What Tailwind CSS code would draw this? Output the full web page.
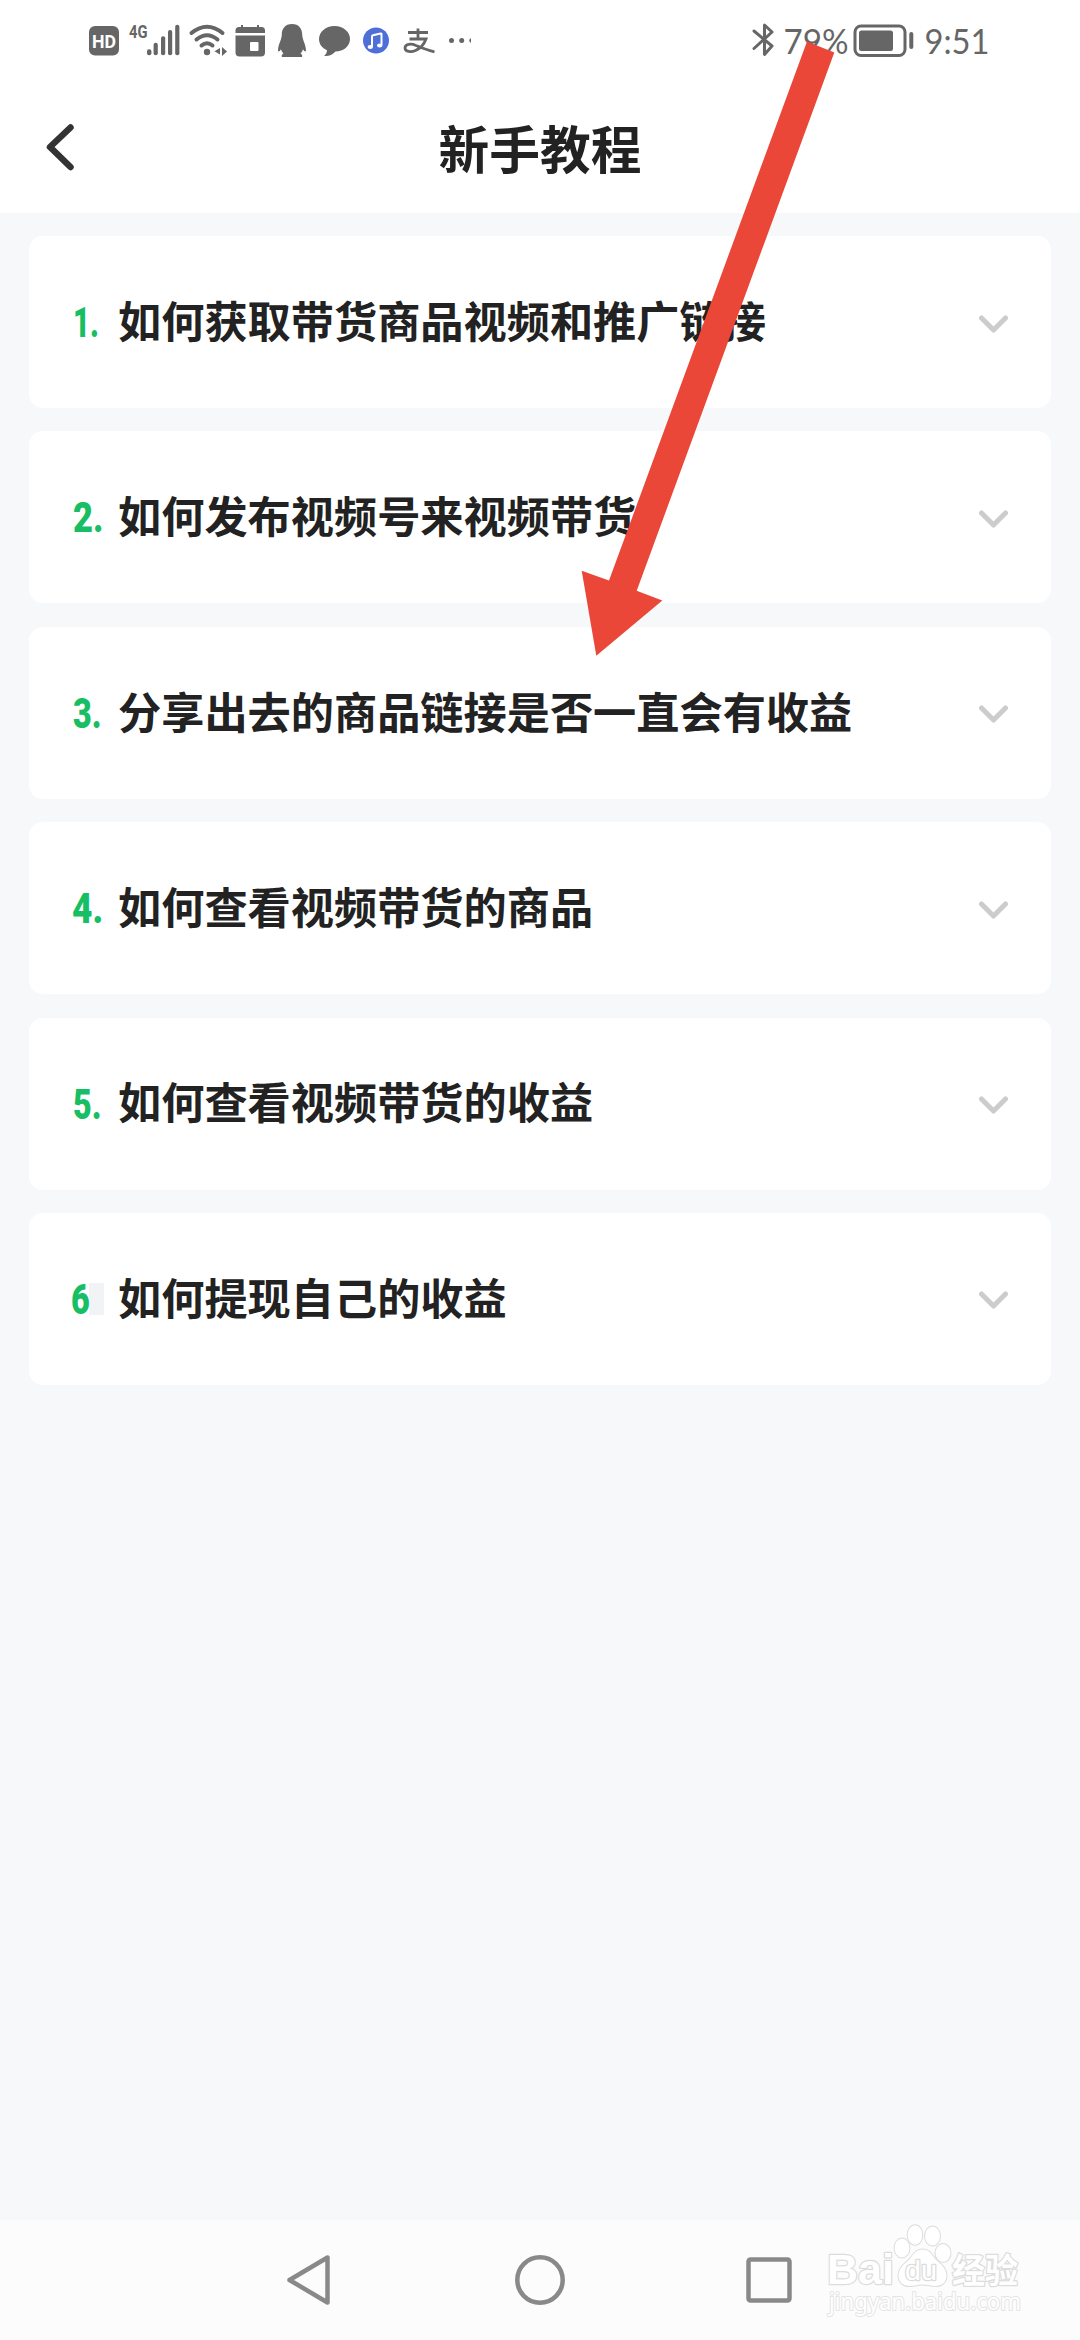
<!DOCTYPE html>
<html lang="zh-CN">
<head>
<meta charset="utf-8">
<title>新手教程</title>
<script src="https://cdn.jsdelivr.net/npm/@tailwindcss/browser@4"></script>
</head>
<body class="relative flex h-[2340px] w-[1080px] flex-col overflow-hidden bg-[#f6f8fa] font-['Noto_Sans_CJK_SC',sans-serif] text-[#222]">
<header class="h-[213px] shrink-0 bg-white">
  <!-- status bar -->
  <div class="flex h-20 items-start justify-between pr-[87px] pl-20 text-[#666]">
    <div class="flex">
      <svg class="h-20 w-[45px]" viewBox="80 0 45 80" fill="currentColor"><rect x="89" y="26" width="30" height="29.5" rx="6"/><text x="92" y="47.700" font-family="Roboto" font-weight="700" font-size="19" textLength="24" lengthAdjust="spacingAndGlyphs" fill="#fff">HD</text></svg>
      <svg class="h-20 w-[60px]" viewBox="125 0 60 80" fill="currentColor"><text x="129" y="38" font-family="Roboto" font-weight="700" font-size="19" textLength="18.500" lengthAdjust="spacingAndGlyphs">4G</text><rect x="147" y="49.3" width="4.4" height="6" rx="2"/><rect x="153.6" y="42.7" width="4.2" height="12.6" rx="2"/><rect x="161" y="36.3" width="4.2" height="19" rx="2"/><rect x="168" y="30" width="4.2" height="25.3" rx="2"/><rect x="175.2" y="24.7" width="4.2" height="30.6" rx="2"/></svg>
      <svg class="h-20 w-[45px]" viewBox="185 0 45 80" fill="none" stroke="currentColor" stroke-width="4" stroke-linecap="round"><path d="M191.500 33Q207 20.500 222.500 33M196.500 39.500Q207 31 217.500 39.500M201.500 45.500Q207 41 212.500 45.500"/><circle cx="207" cy="52" r="3.200" fill="currentColor" stroke="none"/><path d="M220 48v6.500l-5.500-3.200zM222 47v9l5-4.500z" fill="currentColor" stroke="none"/></svg>
      <svg class="h-20 w-[42px]" viewBox="230 0 42 80" fill="currentColor"><path d="M235.500 33v-2.500q0-3.500 3.500-3.500h2v-2h2v2h14v-2h2v2h2.500q3.500 0 3.500 3.500v2.500zM235.500 35.500h29.500v17q0 4-4 4h-21.500q-4 0-4-4z"/><rect x="250" y="42" width="8.500" height="9" rx="1" fill="#fff"/></svg>
      <svg class="h-20 w-10" viewBox="272 0 40 80" fill="currentColor"><path d="M292 24c-7 0-10.200 5-10.200 10.500 0 5-3.300 9-3.800 15.500 0 2 1.200 2 3-.8.700 2 1.500 3.300 2.500 4.300-2 1-2 2.500-1.500 3.500h20c.5-1 .3-2.500-1.500-3.500 1-1 2-2.500 2.500-4.300 1.800 2.800 3 2.800 3 .8-.5-6.500-3.800-10.500-3.800-15.500C302.200 29 299 24 292 24z"/></svg>
      <svg class="h-20 w-[45px]" viewBox="312 0 45 80" fill="currentColor"><path d="M334.500 26c9 0 15.500 6 15.500 13s-6.500 12.500-14.500 12.500c-3.500 4-8 5-11.500 4.300 2-1.500 3-3.500 3-5.600-5-2.200-8-6.200-8-11.200 0-7 6.500-13 15.500-13z"/></svg>
      <svg class="h-20 w-[42px]" viewBox="357 0 42 80"><circle cx="376" cy="40.500" r="13" fill="#4f6fd8"/><path d="M372 47v-10.500q0-1 1-1.200l7.500-1.800q1-.2 1 .8V45" fill="none" stroke="#fff" stroke-width="2"/><ellipse cx="370.300" cy="47" rx="2.700" ry="2" fill="#fff"/><ellipse cx="379.700" cy="45.500" rx="2.700" ry="2" fill="#fff"/></svg>
      <svg class="h-20 w-[43px]" viewBox="399 0 43 80" fill="none" stroke="currentColor" stroke-width="2.800"><path d="M408 32.500h20M418 28.500v10.500M409.500 39h16.500c-2 5.500-6 9.500-10.500 11.500-4 1.800-10.500 1.500-10.500-2.500 0-4.500 6.500-4.500 11-2.500 6 2.500 12 5 18.500 6.300"/></svg>
      <svg class="h-20 w-[29px]" viewBox="442 0 29 80" fill="currentColor"><circle cx="451.500" cy="40.500" r="2.500"/><circle cx="461.700" cy="40.500" r="2.500"/><path d="M471 38.200v4.600a2.400 2.400 0 010-4.600z"/></svg>
    </div>
    <div class="flex">
      <svg class="h-20 w-[34px]" viewBox="747 0 34 80" fill="none" stroke="currentColor" stroke-width="3" stroke-linecap="round" stroke-linejoin="round"><path d="M754 31l18 15-7.500 8.500v-29.500l7.500 7L754 48.500"/></svg>
      <svg class="h-20 w-[69px]" viewBox="781 0 69 80" fill="currentColor"><text x="783.500" y="53.700" font-family="Lato" font-size="35" textLength="65" lengthAdjust="spacingAndGlyphs">79%</text></svg>
      <svg class="h-20 w-[70px]" viewBox="850 0 70 80" fill="currentColor"><rect x="855" y="26" width="50" height="29.500" rx="6" fill="none" stroke="currentColor" stroke-width="3"/><rect x="859" y="30.500" width="34" height="20.500" rx="2.500"/><rect x="909.300" y="32" width="4" height="17" rx="2"/></svg>
      <svg class="h-20 w-[73px]" viewBox="920 0 73 80" fill="currentColor"><text x="924.500" y="53.700" font-family="Lato" font-size="35" textLength="65" lengthAdjust="spacingAndGlyphs">9:51</text></svg>
    </div>
  </div>
  <!-- title bar -->
  <div class="grid h-[133px] grid-cols-3 items-start">
    <svg class="mt-7 ml-10 h-20 w-10" viewBox="40 80 40 80" fill="none" stroke="#333" stroke-width="6.500" stroke-linecap="round" stroke-linejoin="round"><path d="M70.500 99.500L50 119l20.500 20"/></svg>
    <h1 class="pt-[41px] text-center text-[50.700px] leading-[52px] font-bold whitespace-nowrap">新手教程</h1>
  </div>
</header>

<main class="flex grow flex-col gap-[23.400px] px-[29px] pt-[23px]">
  <section class="flex h-[172px] items-center rounded-[14px] bg-white pr-[43px] pl-[44px]"><span class="w-[45px] shrink-0 pt-0.5"><span class="inline-block origin-left scale-x-[0.7] font-[Roboto] text-[42px] leading-none font-black text-[#17be63]">1.</span></span><h2 class="-mt-[5px] grow text-[43.200px] leading-none font-bold whitespace-nowrap">如何获取带货商品视频和推广链接</h2><svg class="mt-[3px] h-5 w-[29px] shrink-0" viewBox="0 0 29 20" fill="none" stroke="#ccc" stroke-width="5" stroke-linecap="round" stroke-linejoin="round"><path d="M2.500 4l12 12 12-12"/></svg></section>
  <section class="flex h-[172px] items-center rounded-[14px] bg-white pr-[43px] pl-[44px]"><span class="w-[45px] shrink-0 pt-0.5"><span class="inline-block origin-left scale-x-[0.82] font-[Roboto] text-[42px] leading-none font-black text-[#17be63]">2.</span></span><h2 class="-mt-[5px] grow text-[43.200px] leading-none font-bold whitespace-nowrap">如何发布视频号来视频带货</h2><svg class="mt-[3px] h-5 w-[29px] shrink-0" viewBox="0 0 29 20" fill="none" stroke="#ccc" stroke-width="5" stroke-linecap="round" stroke-linejoin="round"><path d="M2.500 4l12 12 12-12"/></svg></section>
  <section class="flex h-[172px] items-center rounded-[14px] bg-white pr-[43px] pl-[44px]"><span class="w-[45px] shrink-0 pt-0.5"><span class="inline-block origin-left scale-x-[0.77] font-[Roboto] text-[42px] leading-none font-black text-[#17be63]">3.</span></span><h2 class="-mt-[5px] grow text-[43.200px] leading-none font-bold whitespace-nowrap">分享出去的商品链接是否一直会有收益</h2><svg class="mt-[3px] h-5 w-[29px] shrink-0" viewBox="0 0 29 20" fill="none" stroke="#ccc" stroke-width="5" stroke-linecap="round" stroke-linejoin="round"><path d="M2.500 4l12 12 12-12"/></svg></section>
  <section class="flex h-[172px] items-center rounded-[14px] bg-white pr-[43px] pl-[43px]"><span class="w-[46px] shrink-0 pt-0.5"><span class="inline-block origin-left scale-x-[0.84] font-[Roboto] text-[42px] leading-none font-black text-[#17be63]">4.</span></span><h2 class="-mt-[5px] grow text-[43.200px] leading-none font-bold whitespace-nowrap">如何查看视频带货的商品</h2><svg class="mt-[3px] h-5 w-[29px] shrink-0" viewBox="0 0 29 20" fill="none" stroke="#ccc" stroke-width="5" stroke-linecap="round" stroke-linejoin="round"><path d="M2.500 4l12 12 12-12"/></svg></section>
  <section class="flex h-[172px] items-center rounded-[14px] bg-white pr-[43px] pl-[44px]"><span class="w-[45px] shrink-0 pt-0.5"><span class="inline-block origin-left scale-x-[0.77] font-[Roboto] text-[42px] leading-none font-black text-[#17be63]">5.</span></span><h2 class="-mt-[5px] grow text-[43.200px] leading-none font-bold whitespace-nowrap">如何查看视频带货的收益</h2><svg class="mt-[3px] h-5 w-[29px] shrink-0" viewBox="0 0 29 20" fill="none" stroke="#ccc" stroke-width="5" stroke-linecap="round" stroke-linejoin="round"><path d="M2.500 4l12 12 12-12"/></svg></section>
  <section class="flex h-[172px] items-center rounded-[14px] bg-white pr-[43px] pl-[42px]"><span class="flex w-[47px] shrink-0 items-center pt-0.5"><span class="inline-block w-[18px] origin-left scale-x-[0.77] font-[Roboto] text-[42px] leading-none font-black text-[#17be63]">6</span><span class="-mt-0.5 h-8 w-[15px] bg-[#f2f3f5]"></span></span><h2 class="-mt-[5px] grow text-[43.200px] leading-none font-bold whitespace-nowrap">如何提现自己的收益</h2><svg class="mt-[3px] h-5 w-[29px] shrink-0" viewBox="0 0 29 20" fill="none" stroke="#ccc" stroke-width="5" stroke-linecap="round" stroke-linejoin="round"><path d="M2.500 4l12 12 12-12"/></svg></section>
</main>

<nav class="flex h-[120px] shrink-0 items-center justify-between bg-[#fcfcfc] px-[283px]">
  <svg class="h-[54px] w-[54px]" viewBox="283 2253 54 54" fill="none" stroke="#898989" stroke-width="4.500" stroke-linejoin="round"><path d="M327.500 2257.500v45L289.500 2280z"/></svg>
  <svg class="h-[54px] w-[54px]" viewBox="513 2253 54 54" fill="none" stroke="#898989" stroke-width="4.500"><circle cx="540" cy="2280" r="22.700"/></svg>
  <svg class="h-[54px] w-[54px]" viewBox="743 2253 54 54" fill="none" stroke="#898989" stroke-width="4.500"><rect x="748.500" y="2259.500" width="41" height="41" rx="2"/></svg>
</nav>

<!-- watermark -->
<svg class="absolute top-[2210px] left-[800px] h-[130px] w-[280px]" viewBox="0 0 280 130" fill="#fff" stroke="#dcdcdc" stroke-width="2.500" stroke-linejoin="round" paint-order="stroke">
  <g stroke-width="2"><ellipse cx="102" cy="38" rx="7.500" ry="9.500"/><ellipse cx="115" cy="25" rx="7.300" ry="9.800"/><ellipse cx="132.500" cy="26" rx="7.500" ry="9.500"/><ellipse cx="143" cy="43" rx="7.500" ry="9"/><path d="M122.500 39.500c6 0 9 4 11.500 8 3.500 5 12.500 8.500 12.500 18 0 7-5 10.500-11 10.500-5 0-8-1.500-13-1.500s-8 1.500-13 1.500c-6 0-11-3.500-11-10.500 0-9.500 9-13 12.500-18 2.500-4 5.500-8 11.500-8z"/></g>
  <text x="27" y="74" font-family="Liberation Sans" font-weight="700" font-size="43" textLength="67" lengthAdjust="spacingAndGlyphs">Bai</text>
  <text x="105" y="70" font-family="Liberation Sans" font-weight="400" font-size="27" textLength="32" lengthAdjust="spacingAndGlyphs" stroke-width="2.500">du</text>
  <text x="152" y="73" font-family="Noto Sans CJK SC" font-weight="700" font-size="34" textLength="66" lengthAdjust="spacingAndGlyphs">经验</text>
  <text x="29" y="100" font-family="Noto Sans" font-size="23" textLength="192" lengthAdjust="spacingAndGlyphs" stroke="#e4e4e4" stroke-width="2">jingyan.baidu.com</text>
</svg>

<!-- pointer arrow -->
<svg class="absolute top-0 left-0 h-[700px] w-[1080px]" viewBox="0 0 1080 700"><path fill="#ea4738" d="M807 41.400L834.300 52.400 636.700 590.800 662.300 600.600 596.300 655.700 581.700 570.800 609 580.600z"/></svg>
</body>
</html>
